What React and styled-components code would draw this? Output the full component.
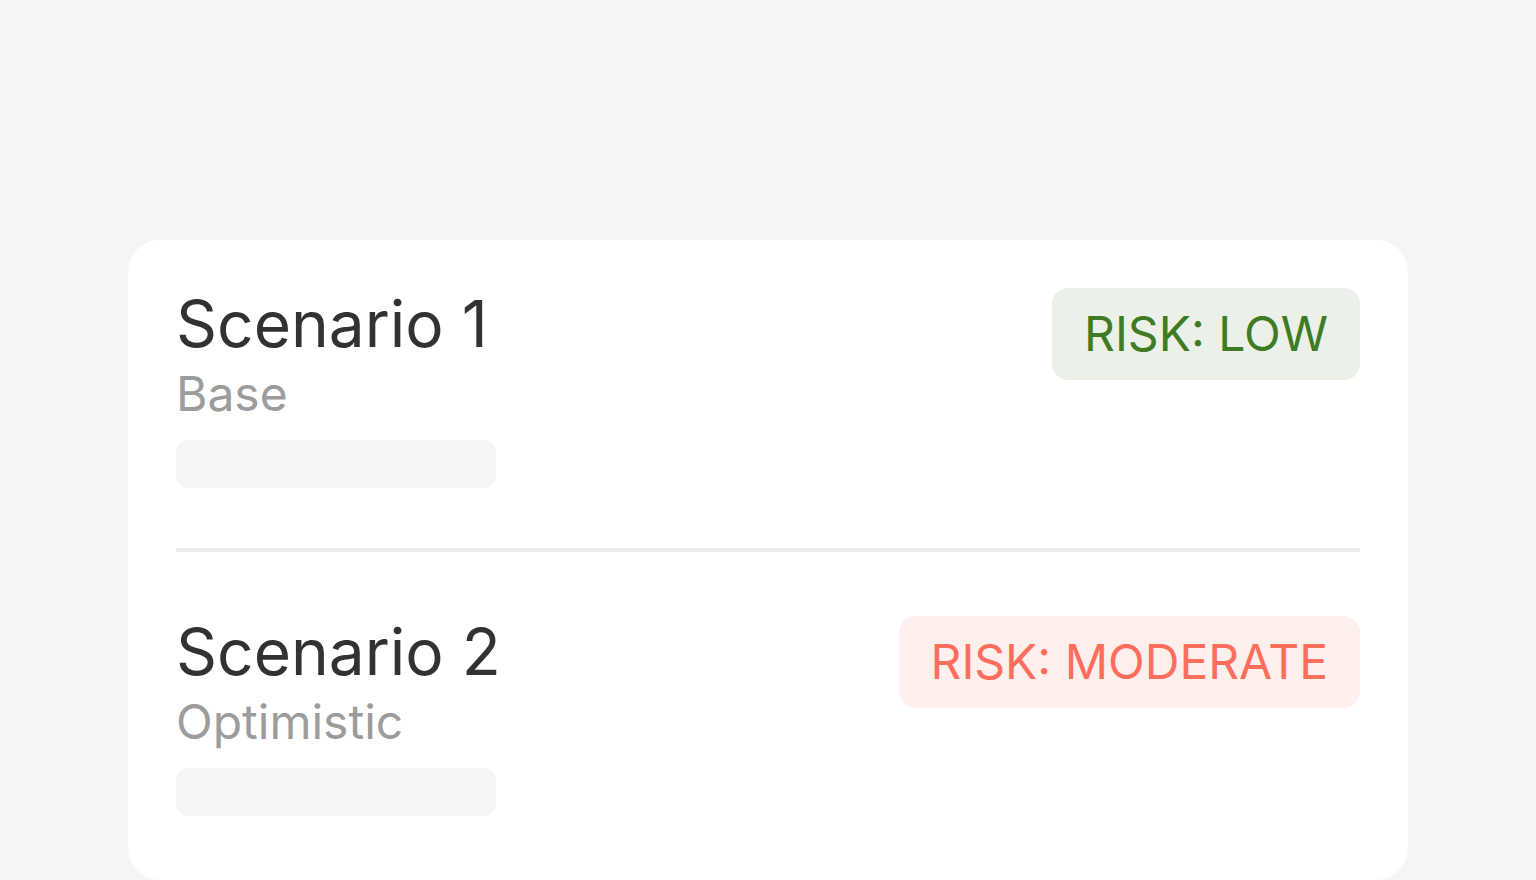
import React from "react";
import styled, { createGlobalStyle } from "styled-components";

const scenarios = [
    { title: "Scenario 1", label: "Base", risk: "low" },
    { title: "Scenario 2", label: "Optimistic", risk: "moderate" },
];

const riskColors = {
    low: { bg: "#ebf0e8", fg: "#3e7b22" },
    moderate: { bg: "#fff0ee", fg: "#ff6e5d" },
};

function App() {
    return (
        <>
            <GlobalStyle />
            <Page>
                <Card>
                    {scenarios.map((s, index) => (
                        <React.Fragment key={s.title}>
                            {index > 0 && <Divider />}
                            <Row>
                                <Info>
                                    <Title>{s.title}</Title>
                                    <Subtitle>{s.label}</Subtitle>
                                    <Placeholder />
                                </Info>
                                <Badge $risk={s.risk}>RISK: {s.risk.toUpperCase()}</Badge>
                            </Row>
                        </React.Fragment>
                    ))}
                </Card>
            </Page>
        </>
    );
}

export default App;

const GlobalStyle = createGlobalStyle`
    html, body {
        margin: 0;
        padding: 0;
        background: #f5f5f5;
        font-family: Inter, "Noto Sans", sans-serif;
    }
`;

const Page = styled.div`
    padding: 240px 128px 0;
    overflow: hidden;
    height: 640px;
`;

const Card = styled.div`
    background: #ffffff;
    border-radius: 32px;
    padding: 48px 48px 64px;
    display: flex;
    flex-direction: column;
`;

const Row = styled.div`
    display: flex;
    justify-content: space-between;
    align-items: flex-start;
`;

const Info = styled.div`
    display: flex;
    flex-direction: column;
`;

const Title = styled.h2`
    margin: 0;
    font-size: 64px;
    font-weight: 400;
    line-height: 72px;
    color: #323232;
`;

const Subtitle = styled.span`
    margin-top: 6px;
    font-size: 48px;
    line-height: 56px;
    color: #9c9c9c;
`;

const Placeholder = styled.div`
    margin-top: 18px;
    width: 320px;
    height: 48px;
    border-radius: 12px;
    background: #f5f5f5;
`;

const Badge = styled.div`
    padding: 16px 32px;
    border-radius: 16px;
    font-size: 48px;
    line-height: 60px;
    background: ${(p) => riskColors[p.$risk].bg};
    color: ${(p) => riskColors[p.$risk].fg};
`;

const Divider = styled.hr`
    margin: 60px 0 64px;
    border: none;
    height: 4px;
    background: #ebebeb;
`;
